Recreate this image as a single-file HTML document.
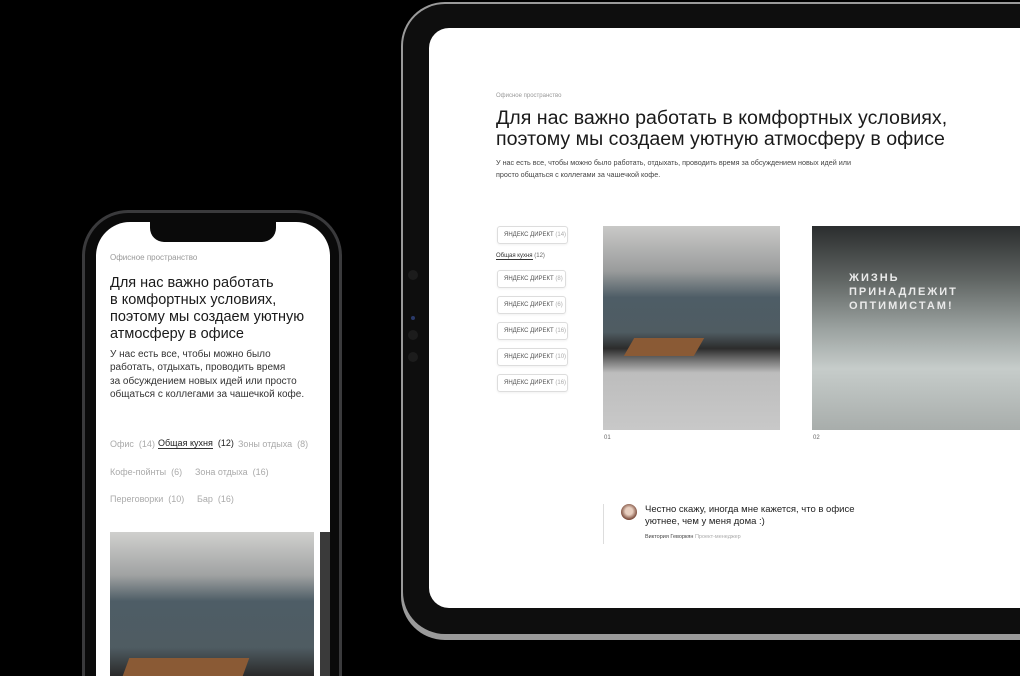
<!DOCTYPE html>
<html style="width:1020px;height:676px;overflow:hidden"><head><meta charset="utf-8"><style>
*{margin:0;padding:0;box-sizing:border-box}
body{width:1020px;height:676px;background:#000;position:relative;overflow:hidden;font-family:"Liberation Sans","Noto Sans CJK SC",sans-serif;color:#222}
.abs{position:absolute}
.tab-outer{left:401px;top:2px;width:619px;height:638px;border-radius:44px 0 0 44px;background:#9a9a9a}
.tab-frame{left:403px;top:4px;width:617px;height:630px;border-radius:42px 0 0 42px;background:#0e0e0e}
.tab-screen{left:429px;top:28px;width:591px;height:580px;border-radius:20px 0 0 20px;background:#fff;overflow:hidden}
.pill{position:absolute;left:68px;height:18px;border:1px solid #ddd;border-radius:3px;font-size:6px;color:#555;line-height:16px;padding-left:6px;width:82px;white-space:nowrap;box-shadow:0 1px 2px rgba(0,0,0,.06)}
.pill span{color:#aaa}
.ph-outer{left:82px;top:210px;width:260px;height:466px;border-radius:46px 46px 0 0;background:#3a3a3c}
.ph-frame{left:85px;top:213px;width:254px;height:463px;border-radius:43px 43px 0 0;background:#0a0a0a}
.ph-screen{left:96px;top:222px;width:234px;height:454px;border-radius:34px 34px 0 0;background:#fff;overflow:hidden}
.tag{position:absolute;font-size:9px;color:#aaa;white-space:nowrap}
</style></head><body>
<div class="abs tab-outer"></div>
<div class="abs tab-frame"></div>
<div class="abs" style="left:408px;top:270px;width:10px;height:10px;border-radius:5px;background:#1c1c1c"></div>
<div class="abs" style="left:408px;top:330px;width:10px;height:10px;border-radius:5px;background:#1c1c1c"></div>
<div class="abs" style="left:408px;top:352px;width:10px;height:10px;border-radius:5px;background:#1c1c1c"></div>
<div class="abs" style="left:411px;top:316px;width:4px;height:4px;border-radius:2px;background:#2a3a6a"></div>
<div class="abs tab-screen">
  <div class="abs" style="left:67px;top:65px;font-size:6px;color:#999">Офисное пространство</div>
  <div class="abs" style="left:67px;top:80px;font-size:19.6px;line-height:21px;color:#1a1a1a;white-space:nowrap">Для нас важно работать в комфортных условиях,<br>поэтому мы создаем уютную атмосферу в офисе</div>
  <div class="abs" style="left:67px;top:129px;font-size:7.2px;line-height:12px;color:#444;white-space:nowrap">У нас есть все, чтобы можно было работать, отдыхать, проводить время за обсуждением новых идей или<br>просто общаться с коллегами за чашечкой кофе.</div>
  <div class="pill" style="top:198px;width:71px">ЯНДЕКС ДИРЕКТ <span>(14)</span></div>
  <div class="abs" style="left:67px;top:225px;font-size:6px;color:#333;white-space:nowrap"><span style="border-bottom:1px solid #333">Общая кухня</span> <span style="color:#666">(12)</span></div>
  <div class="pill" style="top:242px;width:69px">ЯНДЕКС ДИРЕКТ <span>(8)</span></div>
  <div class="pill" style="top:268px;width:69px">ЯНДЕКС ДИРЕКТ <span>(6)</span></div>
  <div class="pill" style="top:294px;width:71px">ЯНДЕКС ДИРЕКТ <span>(16)</span></div>
  <div class="pill" style="top:320px;width:71px">ЯНДЕКС ДИРЕКТ <span>(10)</span></div>
  <div class="pill" style="top:346px;width:71px">ЯНДЕКС ДИРЕКТ <span>(16)</span></div>
  <div class="abs" style="left:174px;top:198px;width:177px;height:204px;background:linear-gradient(180deg,#c9c9c7 0%,#9a9c9c 22%,#4e5d66 35%,#4f5c62 52%,#2c2c2c 60%,#bdbdbd 72%,#c8c8c8 100%)"></div>
  <div class="abs" style="left:200px;top:310px;width:70px;height:18px;background:#8a5a35;transform:skewX(-30deg)"></div>
  <div class="abs" style="left:383px;top:198px;width:208px;height:204px;background:linear-gradient(180deg,#2a2d2e 0%,#5d6260 25%,#9aa19f 50%,#c6ccca 70%,#a8adab 100%)"></div>
  <div class="abs" style="left:420px;top:243px;font-size:11px;font-weight:bold;color:#eaeaea;letter-spacing:2px;line-height:14px">ЖИЗНЬ<br>ПРИНАДЛЕЖИТ<br>ОПТИМИСТАМ!</div>
  <div class="abs" style="left:175px;top:407px;font-size:6px;color:#666">01</div>
  <div class="abs" style="left:384px;top:407px;font-size:6px;color:#666">02</div>
  <div class="abs" style="left:174px;top:476px;width:1px;height:40px;background:#ddd"></div>
  <div class="abs" style="left:192px;top:476px;width:16px;height:16px;border-radius:8px;background:radial-gradient(circle at 50% 45%,#e8cfc0 30%,#7a4a3a 70%)"></div>
  <div class="abs" style="left:216px;top:476px;font-size:9.5px;line-height:12px;color:#222;white-space:nowrap">Честно скажу, иногда мне кажется, что в офисе<br>уютнее, чем у меня дома :)</div>
  <div class="abs" style="left:216px;top:506px;font-size:5.5px;color:#444;white-space:nowrap">Виктория Геворкян <span style="color:#aaa">Проект-менеджер</span></div>
</div>

<div class="abs ph-outer"></div>
<div class="abs ph-frame"></div>
<div class="abs ph-screen">
  <div class="abs" style="left:14px;top:31px;font-size:8px;color:#999">Офисное пространство</div>
  <div class="abs" style="left:14px;top:53px;font-size:14.5px;line-height:17px;color:#1a1a1a;white-space:nowrap">Для нас важно работать<br>в комфортных условиях,<br>поэтому мы создаем уютную<br>атмосферу в офисе</div>
  <div class="abs" style="left:14px;top:126px;font-size:10px;line-height:13.3px;color:#333;white-space:nowrap">У нас есть все, чтобы можно было<br>работать, отдыхать, проводить время<br>за обсуждением новых идей или просто<br>общаться с коллегами за чашечкой кофе.</div>
  <div class="tag" style="left:14px;top:217px">Офис &nbsp;(14)</div>
  <div class="tag" style="left:62px;top:216px;color:#222"><span style="border-bottom:1px solid #333">Общая кухня</span> &nbsp;(12)</div>
  <div class="tag" style="left:142px;top:217px">Зоны отдыха &nbsp;(8)</div>
  <div class="tag" style="left:14px;top:245px">Кофе-пойнты &nbsp;(6)</div>
  <div class="tag" style="left:99px;top:245px">Зона отдыха &nbsp;(16)</div>
  <div class="tag" style="left:14px;top:272px">Переговорки &nbsp;(10)</div>
  <div class="tag" style="left:101px;top:272px">Бар &nbsp;(16)</div>
  <div class="abs" style="left:14px;top:310px;width:204px;height:144px;background:linear-gradient(180deg,#d0d0ce 0%,#a0a2a2 30%,#4e5d66 48%,#4f5c62 80%,#2a2a2a 100%)"></div>
  <div class="abs" style="left:30px;top:436px;width:120px;height:18px;background:#8a5a35;transform:skewX(-20deg)"></div>
  <div class="abs" style="left:224px;top:310px;width:10px;height:144px;background:#3a3a3a"></div>
</div>
<div class="abs" style="left:150px;top:220px;width:126px;height:22px;border-radius:0 0 14px 14px;background:#0a0a0a"></div>
</body></html>
